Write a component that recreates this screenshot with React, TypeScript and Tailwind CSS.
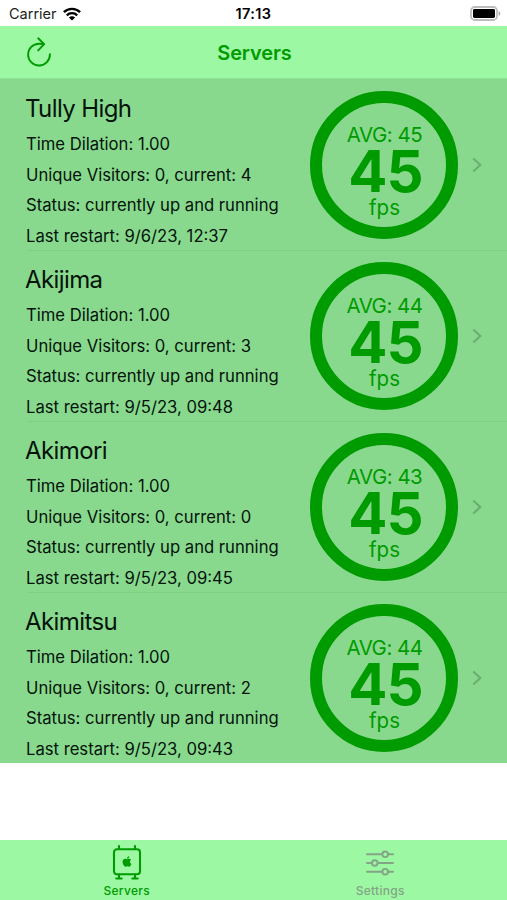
import { useState } from 'react'
import { FaApple } from 'react-icons/fa'

const servers = [
  { name: 'Tully High', dilation: '1.00', visitors: 0, current: 4, status: 'currently up and running', restart: '9/6/23, 12:37', avg: 45, fps: 45 },
  { name: 'Akijima', dilation: '1.00', visitors: 0, current: 3, status: 'currently up and running', restart: '9/5/23, 09:48', avg: 44, fps: 45 },
  { name: 'Akimori', dilation: '1.00', visitors: 0, current: 0, status: 'currently up and running', restart: '9/5/23, 09:45', avg: 43, fps: 45 },
  { name: 'Akimitsu', dilation: '1.00', visitors: 0, current: 2, status: 'currently up and running', restart: '9/5/23, 09:43', avg: 44, fps: 45 },
]

type Server = (typeof servers)[number]

function WifiIcon() {
  return (
    <svg width="18" height="14" viewBox="0 0 18 14" fill="none" stroke="#000" strokeWidth="2.4">
      <path d="M0.9 5.2a11.6 11.6 0 0 1 16.2 0" />
      <path d="M3.8 8.3a7.4 7.4 0 0 1 10.4 0" />
      <path d="M9 13.6L5.9 10.5a4.4 4.4 0 0 1 6.2 0z" fill="#000" stroke="none" />
    </svg>
  )
}

function BatteryIcon() {
  return (
    <svg width="31" height="15" viewBox="0 0 31 15">
      <rect x="1" y="1" width="26" height="13" rx="3.8" fill="#fff" stroke="#bdbdbd" strokeWidth="1.8" />
      <rect x="3" y="3" width="22" height="9" rx="1.4" fill="#000" />
      <path d="M28.6 5v5c1-.4 1.8-1.4 1.8-2.5s-.8-2.1-1.8-2.5z" fill="#a9a9a9" />
    </svg>
  )
}

function RefreshIcon() {
  return (
    <svg width="26" height="30" viewBox="0 0 26 30" fill="none" stroke="#009b00" strokeWidth="1.9" strokeLinecap="round" strokeLinejoin="round">
      <path d="M23.900 17.300A10.900 10.900 0 1 1 13 6.700c1.600 0 3 .1 4.400.5" />
      <path d="M12.200 1.300l6 5.900-6 6.200" />
    </svg>
  )
}

function ServerIcon() {
  return (
    <svg width="30" height="36" viewBox="0 0 30 36" fill="none" stroke="currentColor" strokeWidth="2.1" strokeLinecap="round">
      <rect x="2" y="5.3" width="26" height="25" rx="3" />
      <path d="M7 5V2M23 5V2M7 30.5v3.5M23 30.5v3.5M4.300 34.500h5.400M20.300 34.500h5.400" />
      <FaApple x={9} y={11.5} width={12} height={12} size={12} stroke="none" />
    </svg>
  )
}

function SlidersIcon() {
  return (
    <svg width="30" height="36" viewBox="0 0 30 36" fill="none" stroke="currentColor" strokeWidth="1.9" strokeLinecap="round">
      <path d="M2 10.300h15.200M23.200 10.300H28M2 19h4.800M12.800 19H28M2 27.700h15.200M23.200 27.700H28" />
      <circle cx="20.2" cy="10.3" r="2.8" />
      <circle cx="9.8" cy="19" r="2.8" />
      <circle cx="20.2" cy="27.7" r="2.8" />
    </svg>
  )
}

function FpsGauge({ avg, fps }: { avg: number; fps: number }) {
  return (
    <div className="flex h-[148px] w-[148px] shrink-0 flex-col items-center rounded-full border-[12px] border-[#009b00] pt-[20px] text-[#009b00]">
      <span className="pl-px text-[20.5px] leading-[24px] tracking-[-0.5px] whitespace-nowrap">AVG: {avg}</span>
      <span className="pl-[3px] text-[58px] leading-[48px] font-bold tracking-[-1px]">{fps}</span>
      <span className="pt-px pl-px text-[20.5px] leading-[24px]">fps</span>
    </div>
  )
}

function ServerRow({ server, last }: { server: Server; last: boolean }) {
  return (
    <li className="relative flex h-[171px] items-start bg-[#88d98d] pl-[26px]">
      <div className="w-[284px] shrink-0 pt-[14px] text-[16.65px] leading-[30.6px] whitespace-nowrap text-[#03130a]">
        <h2 className="mb-[4px] -ml-px text-[24px] leading-[32px] tracking-[-0.6px]">{server.name}</h2>
        <p>Time Dilation: {server.dilation}</p>
        <p>Unique Visitors: {server.visitors}, current: {server.current}</p>
        <p>Status: {server.status}</p>
        <p>Last restart: {server.restart}</p>
      </div>
      <div className="pt-[12px]">
        <FpsGauge avg={server.avg} fps={server.fps} />
      </div>
      <svg className="mt-[77.5px] ml-[14px]" width="10" height="16" viewBox="0 0 10 16" fill="none" stroke="#6cb071" strokeWidth="2.3">
        <path d="M1.3 1.500L8.200 8l-6.900 6.500" />
      </svg>
      {!last && <div className="absolute right-0 -bottom-px left-[27px] z-10 h-px bg-[#7fce85]" />}
    </li>
  )
}

export default function App() {
  const [tab, setTab] = useState('servers')

  return (
    <div className="flex h-[900px] w-[507px] flex-col overflow-hidden bg-white font-['Inter',sans-serif]">
      <div className="grid h-[26px] shrink-0 grid-cols-3 items-center pr-[6px] pl-[9px] text-[14.5px] leading-[18px] text-[#222]">
        <div className="flex items-center gap-[6px] pt-px">
          <span>Carrier</span>
          <WifiIcon />
        </div>
        <span className="pt-[2px] pr-[3px] text-center font-semibold tracking-[0.4px] text-black">17:13</span>
        <div className="flex justify-end">
          <BatteryIcon />
        </div>
      </div>

      <header className="grid h-[53px] shrink-0 grid-cols-3 items-center border-b border-[#8fe395] bg-[#9cf8a2]">
        <button className="ml-[26px] w-[26px]" aria-label="Refresh">
          <RefreshIcon />
        </button>
        <h1 className="pt-px pl-[2px] text-center text-[20px] font-semibold tracking-[-0.1px] text-[#009b00]">Servers</h1>
      </header>

      <ul className="flex-1">
        {servers.map((server, i) => (
          <ServerRow key={server.name} server={server} last={i === servers.length - 1} />
        ))}
      </ul>

      <nav className="grid h-[60px] shrink-0 grid-cols-2 bg-[#9cf8a2] text-[12px] leading-[14px] font-medium tracking-[0.3px]">
        <button
          onClick={() => setTab('servers')}
          className={`flex flex-col items-center pt-[4px] ${tab === 'servers' ? 'text-[#009b00]' : 'text-[#84a486]'}`}
        >
          <ServerIcon />
          <span className="mt-[4px]">Servers</span>
        </button>
        <button
          onClick={() => setTab('settings')}
          className={`flex flex-col items-center pt-[4px] ${tab === 'settings' ? 'text-[#009b00]' : 'text-[#84a486]'}`}
        >
          <SlidersIcon />
          <span className="mt-[4px]">Settings</span>
        </button>
      </nav>
    </div>
  )
}
